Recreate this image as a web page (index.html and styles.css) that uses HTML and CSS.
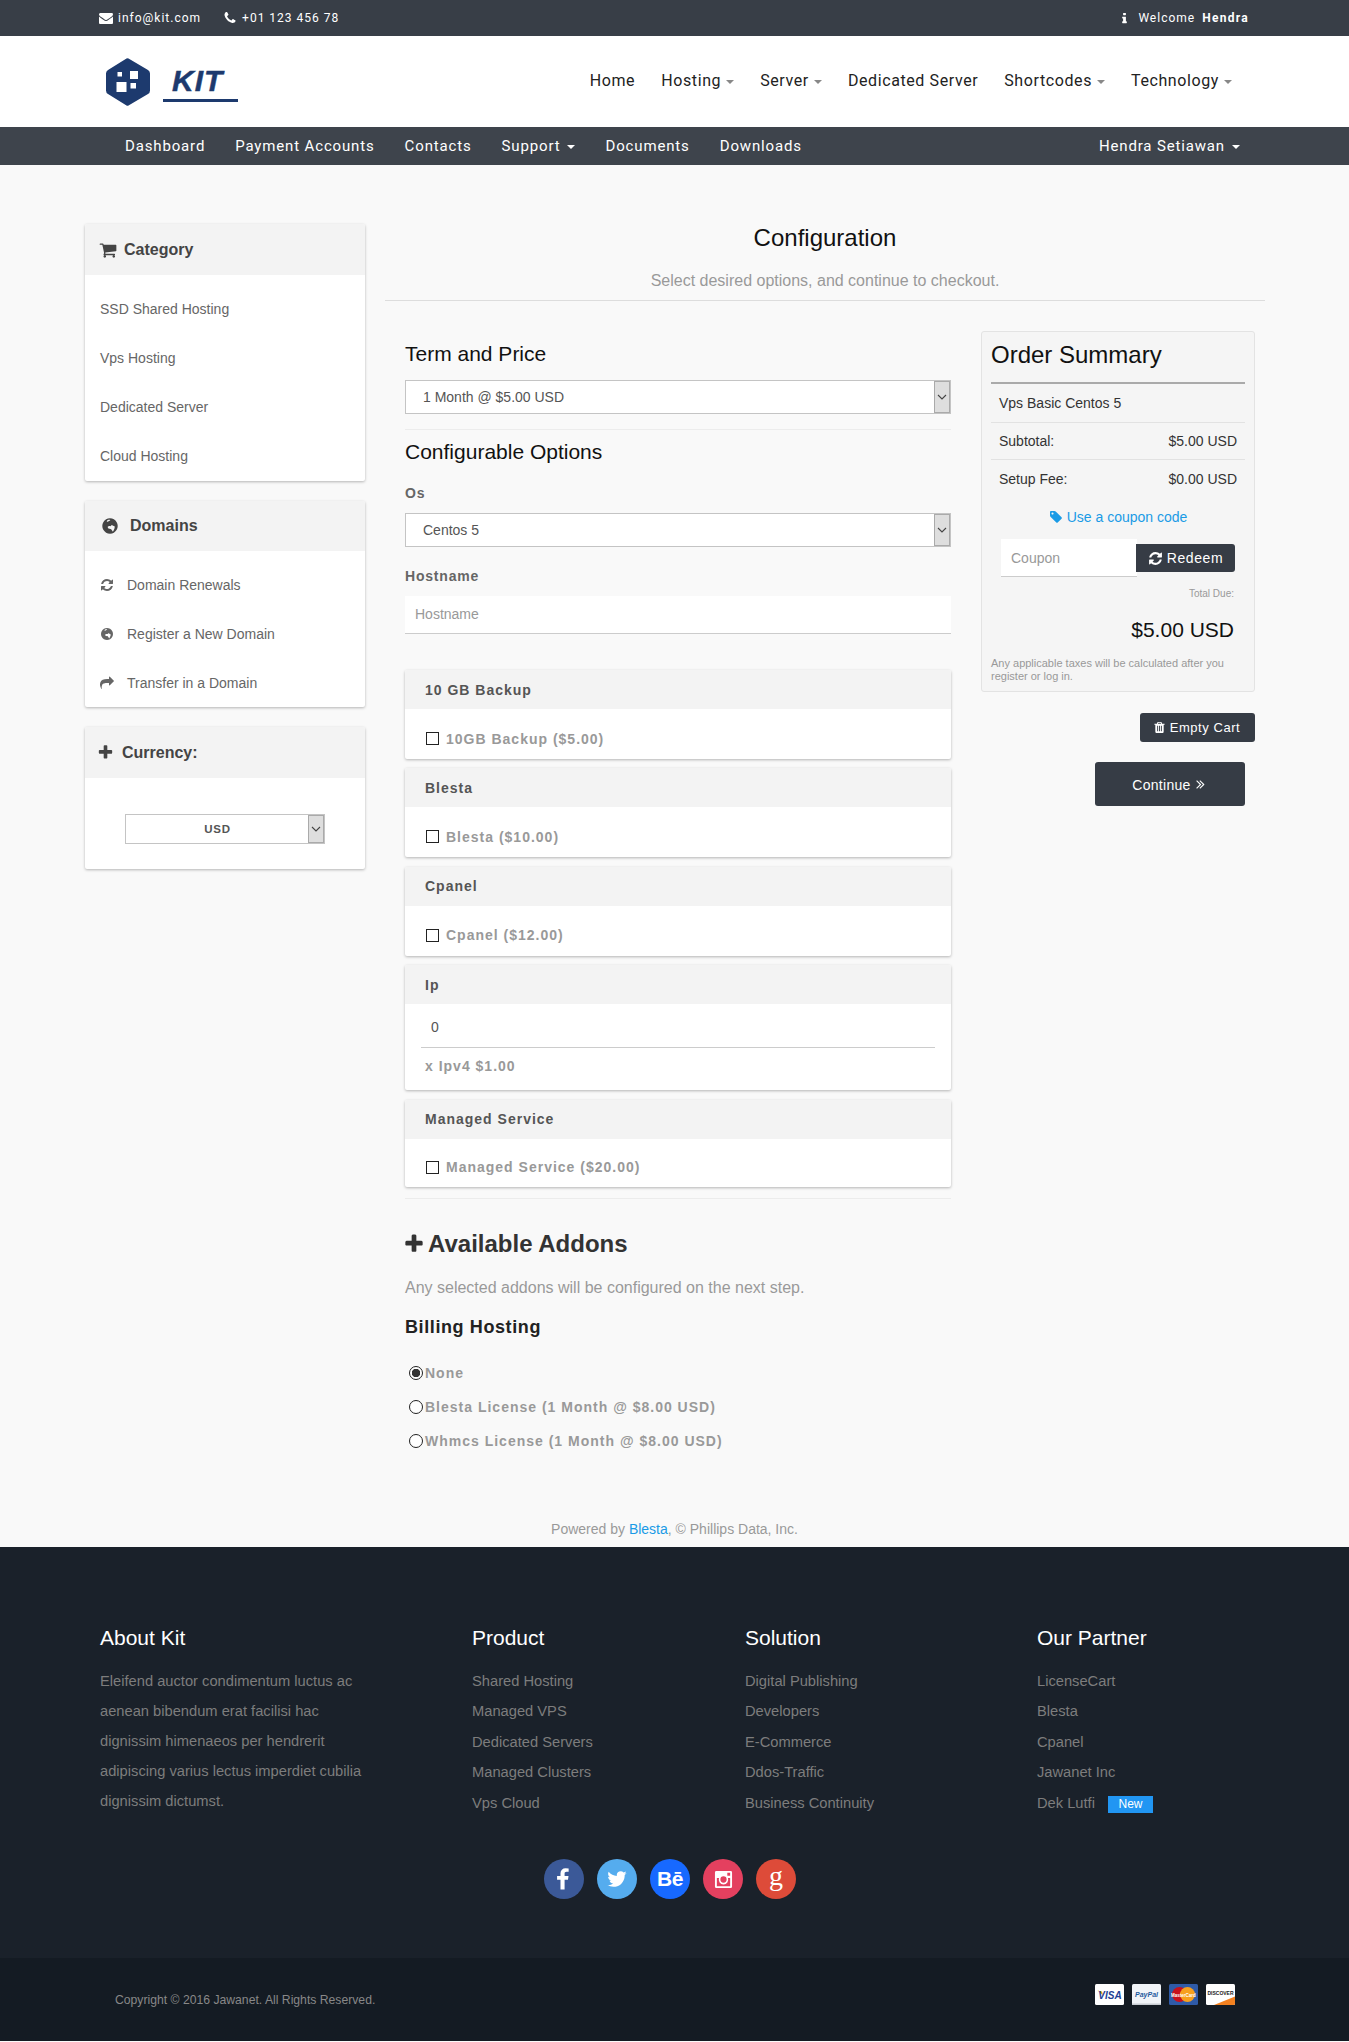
FILE: index.html
```html
<!DOCTYPE html>
<html lang="en">
<head>
<meta charset="utf-8">
<title>Configuration</title>
<link rel="stylesheet" href="styles.css">
</head>
<body>
<svg class="defs" width="0" height="0" aria-hidden="true">
  <symbol id="i-env" viewBox="0 0 1792 1792"><path d="M1792 710v794q0 66-47 113t-113 47h-1472q-66 0-113-47t-47-113v-794q44 49 101 87 362 246 497 345 57 42 92.500 65.500t94.500 48 110 24.500h2q51 0 110-24.500t94.500-48 92.500-65.500q170-123 498-345 57-39 100-87zm0-294q0 79-49 151t-122 123q-376 261-468 325-10 7-42.500 30.500t-54 38-52 32.500-57.500 27-50 9h-2q-23 0-50-9t-57.500-27-52-32.500-54-38-42.500-30.500q-91-64-262-182.500t-205-142.500q-62-42-117-115.500t-55-136.500q0-78 41.500-130t118.500-52h1472q65 0 112.500 47t47.500 113z"/></symbol>
  <symbol id="i-phone" viewBox="0 0 1792 1792"><path d="M1600 1240q0 27-10 70.500t-21 68.500q-21 50-122 106-94 51-186 51-27 0-53-3.500t-57.500-12.500-47-14.500-55.500-20.500-49-18q-98-35-175-83-127-79-264-216t-216-264q-48-77-83-175-3-9-18-49t-20.500-55.500-14.500-47-12.500-57.500-3.500-53q0-92 51-186 56-101 106-122 25-11 68.500-21t70.500-10q14 0 21 3 18 6 53 76 11 19 30 54t35 63.500 31 53.500q3 4 17.500 25t21.500 35.500 7 28.500q0 20-28.500 50t-62 55-62 53-28.500 46q0 9 5 22.500t8.500 20.500 14 24 11.500 19q76 137 174 235t235 174q2 1 19 11.500t24 14 20.500 8.500 22.500 5q18 0 46-28.500t53-62 55-62 50-28.500q14 0 28.500 7t35.500 21.500 25 17.500q25 15 53.500 31t63.500 35 54 30q70 35 76 53 3 7 3 21z"/></symbol>
  <symbol id="i-info" viewBox="0 0 1792 1792"><path d="M1216 1344v128q0 26-19 45t-45 19h-512q-26 0-45-19t-19-45v-128q0-26 19-45t45-19h64v-384h-64q-26 0-45-19t-19-45v-128q0-26 19-45t45-19h384q26 0 45 19t19 45v576h64q26 0 45 19t19 45zm-128-1152v192q0 26-19 45t-45 19h-256q-26 0-45-19t-19-45v-192q0-26 19-45t45-19h256q26 0 45 19t19 45z"/></symbol>
  <symbol id="i-plus" viewBox="0 0 1792 1792"><path d="M1600 736v192q0 40-28 68t-68 28h-416v416q0 40-28 68t-68 28h-192q-40 0-68-28t-28-68v-416h-416q-40 0-68-28t-28-68v-192q0-40 28-68t68-28h416v-416q0-40 28-68t68-28h192q40 0 68 28t28 68v416h416q40 0 68 28t28 68z"/></symbol>
  <symbol id="i-refresh" viewBox="0 0 1792 1792"><path d="M1639 1056q0 5-1 7-64 268-268 434.500t-478 166.500q-146 0-282.500-55t-243.500-157l-129 129q-19 19-45 19t-45-19-19-45v-448q0-26 19-45t45-19h448q26 0 45 19t19 45-19 45l-137 137q71 66 161 102t187 36q134 0 250-65t186-179q11-17 53-117 8-23 30-23h192q13 0 22.500 9.500t9.500 22.500zm25-800v448q0 26-19 45t-45 19h-448q-26 0-45-19t-19-45 19-45l138-138q-148-137-349-137-134 0-250 65t-186 179q-11 17-53 117-8 23-30 23h-199q-13 0-22.500-9.500t-9.500-22.500v-7q65-268 270-434.500t480-166.500q146 0 284 55.500t245 156.500l130-129q19-19 45-19t45 19 19 45z"/></symbol>
  <symbol id="i-share" viewBox="0 0 1792 1792"><path d="M1792 640q0 26-19 45l-512 512q-19 19-45 19t-45-19-19-45v-256h-224q-98 0-175.500 6t-154 21.500-133 42.500-105.500 69.500-80 101-48.500 138.500-17.500 181q0 55 5 123 0 6 2.500 23.500t2.500 26.500q0 15-8.500 25t-23.500 10q-16 0-28-17-7-9-13-22t-13.500-30-10.500-24q-127-285-127-451 0-199 53-333 162-403 875-403h224v-256q0-26 19-45t45-19 45 19l512 512q19 19 19 45z"/></symbol>
  <symbol id="i-cart" viewBox="0 0 1792 1792"><path d="M704 1536q0 52-38 90t-90 38-90-38-38-90 38-90 90-38 90 38 38 90zm896 0q0 52-38 90t-90 38-90-38-38-90 38-90 90-38 90 38 38 90zm128-1088v512q0 24-16.500 42.500t-40.500 21.500l-1044 122q13 60 13 70 0 16-24 64h920q26 0 45 19t19 45-19 45-45 19h-1024q-26 0-45-19t-19-45q0-11 8-31.500t16-36 21.500-40 15.500-29.500l-177-823h-204q-26 0-45-19t-19-45 19-45 45-19h256q16 0 28.500 6.500t19.500 15.500 13 24.500 8 26 5.500 29.500 4.500 26h1201q26 0 45 19t19 45z"/></symbol>
  <symbol id="i-tag" viewBox="0 0 1792 1792"><path d="M576 448q0-53-37.500-90.500t-90.500-37.500-90.500 37.500-37.500 90.500 37.500 90.500 90.500 37.500 90.500-37.500 37.500-90.500zm1067 576q0 53-37 90l-491 492q-39 37-91 37-53 0-90-37l-715-716q-38-37-64.500-101t-26.500-117v-416q0-52 38-90t90-38h416q53 0 117 26.500t102 64.500l715 714q37 39 37 91z"/></symbol>
  <symbol id="i-trash" viewBox="0 0 1792 1792"><path d="M704 1376v-704q0-14-9-23t-23-9h-64q-14 0-23 9t-9 23v704q0 14 9 23t23 9h64q14 0 23-9t9-23zm256 0v-704q0-14-9-23t-23-9h-64q-14 0-23 9t-9 23v704q0 14 9 23t23 9h64q14 0 23-9t9-23zm256 0v-704q0-14-9-23t-23-9h-64q-14 0-23 9t-9 23v704q0 14 9 23t23 9h64q14 0 23-9t9-23zm-544-992h448l-48-117q-7-9-17-11h-317q-10 2-17 11zm928 32v64q0 14-9 23t-23 9h-96v948q0 83-47 143.500t-113 60.500h-832q-66 0-113-58.500t-47-141.500v-952h-96q-14 0-23-9t-9-23v-64q0-14 9-23t23-9h309l70-167q15-37 54-63t79-26h320q40 0 79 26t54 63l70 167h309q14 0 23 9t9 23z"/></symbol>
  <symbol id="i-globe" viewBox="0 0 1792 1792"><path fill-rule="evenodd" d="M896 128q209 0 385.500 103t279.500 279.500 103 385.500-103 385.500-279.500 279.500-385.500 103-385.500-103-279.500-279.500-103-385.500 103-385.500 279.500-279.500 385.500-103zM1180 1470c-40-110-120-170-170-250-40-60-150-70-230-50-70-40-130-130-100-220 70-60 170-70 250-40 70-30 90-120 170-120 60 60 150 110 230 110 50 90 40 200-10 290-40 110-90 210-140 280zM640 320c90-40 200-50 290-30-30 70-100 110-170 130-40 60-130 60-190 20 20-50 40-90 70-120z"/></symbol>
  <symbol id="i-dbl" viewBox="0 64 1792 1792"><path d="M979 960q0 13-10 23l-466 466q-10 10-23 10t-23-10l-50-50q-10-10-10-23t10-23l393-393-393-393q-10-10-10-23t10-23l50-50q10-10 23-10t23 10l466 466q10 10 10 23zm384 0q0 13-10 23l-466 466q-10 10-23 10t-23-10l-50-50q-10-10-10-23t10-23l393-393-393-393q-10-10-10-23t10-23l50-50q10-10 23-10t23 10l466 466q10 10 10 23z"/></symbol>
  <symbol id="i-chev" viewBox="0 0 10 6"><path d="M1 1l4 4 4-4" fill="none" stroke="#444" stroke-width="1.1"/></symbol>
</svg>

<div class="topbar">
  <div class="top-left">
    <span class="top-item"><svg class="ic ic-top"><use href="#i-env"/></svg>info@kit.com</span>
    <span class="top-item"><svg class="ic ic-top"><use href="#i-phone"/></svg>+01 123 456 78</span>
  </div>
  <div class="top-right"><svg class="ic ic-top"><use href="#i-info"/></svg>Welcome <b>Hendra</b></div>
</div>

<header class="header">
  <a class="logo" href="#">
    <svg class="logo-mark" viewBox="0 0 46 50">
      <path d="M23 1.500l19.500 11.500q2 1.200 2 3.500v17q0 2.300-2 3.500l-19.500 11.500q-1 .6-2 0L2.500 37q-2-1.200-2-3.500v-17q0-2.300 2-3.500L21 1.500q1-.6 2 0z" fill="#1d3a6e"/>
      <rect x="24.500" y="14" width="8" height="8" fill="#fff"/>
      <rect x="12" y="15" width="4.500" height="4.500" fill="#fff"/>
      <rect x="11" y="25" width="10" height="10" fill="#fff"/>
      <rect x="25" y="26" width="5.500" height="5.500" fill="#fff"/>
    </svg>
    <span class="logo-word">KIT</span>
  </a>
  <nav class="mainnav">
    <a href="#">Home</a>
    <a href="#">Hosting<i class="caret"></i></a>
    <a href="#">Server<i class="caret"></i></a>
    <a href="#">Dedicated Server</a>
    <a href="#">Shortcodes<i class="caret"></i></a>
    <a href="#">Technology<i class="caret"></i></a>
  </nav>
</header>

<div class="subnav">
  <nav class="subnav-left">
    <a href="#">Dashboard</a>
    <a href="#">Payment Accounts</a>
    <a href="#">Contacts</a>
    <a href="#">Support<i class="caret caret-light"></i></a>
    <a href="#">Documents</a>
    <a href="#">Downloads</a>
  </nav>
  <a class="subnav-user" href="#">Hendra Setiawan<i class="caret caret-light"></i></a>
</div>

<main class="page">
  <aside class="sidebar">
    <section class="side-panel">
      <h3 class="side-head side-head-cat"><svg class="ic ic-side"><use href="#i-cart"/></svg>Category</h3>
      <ul class="side-list">
        <li><a href="#">SSD Shared Hosting</a></li>
        <li><a href="#">Vps Hosting</a></li>
        <li><a href="#">Dedicated Server</a></li>
        <li><a href="#">Cloud Hosting</a></li>
      </ul>
    </section>
    <section class="side-panel">
      <h3 class="side-head side-head-dom"><svg class="ic ic-side"><use href="#i-globe"/></svg>Domains</h3>
      <ul class="side-list side-list-dom">
        <li><a href="#"><svg class="ic ic-item"><use href="#i-refresh"/></svg>Domain Renewals</a></li>
        <li><a href="#"><svg class="ic ic-item"><use href="#i-globe"/></svg>Register a New Domain</a></li>
        <li><a href="#"><svg class="ic ic-item"><use href="#i-share"/></svg>Transfer in a Domain</a></li>
      </ul>
    </section>
    <section class="side-panel">
      <h3 class="side-head side-head-cur"><svg class="ic ic-side"><use href="#i-plus"/></svg>Currency:</h3>
      <div class="currency-body">
        <div class="sel sel-small">
          <select class="sel-input sel-input-usd"><option>USD</option></select>
          <span class="sel-btn"><svg class="sel-chev"><use href="#i-chev"/></svg></span>
        </div>
      </div>
    </section>
  </aside>

  <div class="content">
    <div class="title-block">
      <h1 class="title">Configuration</h1>
      <p class="subtitle">Select desired options, and continue to checkout.</p>
    </div>
    <div class="content-cols">
      <form class="config">
        <h2 class="h-section h-term">Term and Price</h2>
        <div class="sel">
          <select class="sel-input"><option>1 Month @ $5.00 USD</option></select>
          <span class="sel-btn"><svg class="sel-chev"><use href="#i-chev"/></svg></span>
        </div>
        <hr class="rule rule-a">
        <h2 class="h-section h-conf">Configurable Options</h2>
        <label class="field-label field-os">Os</label>
        <div class="sel">
          <select class="sel-input"><option>Centos 5</option></select>
          <span class="sel-btn"><svg class="sel-chev"><use href="#i-chev"/></svg></span>
        </div>
        <label class="field-label field-host">Hostname</label>
        <input class="text-input" type="text" placeholder="Hostname">

        <div class="opt-panels">
          <section class="opt-panel">
            <h4 class="opt-head">10 GB Backup</h4>
            <label class="opt-body"><input class="check" type="checkbox">10GB Backup ($5.00)</label>
          </section>
          <section class="opt-panel">
            <h4 class="opt-head">Blesta</h4>
            <label class="opt-body"><input class="check" type="checkbox">Blesta ($10.00)</label>
          </section>
          <section class="opt-panel">
            <h4 class="opt-head">Cpanel</h4>
            <label class="opt-body"><input class="check" type="checkbox">Cpanel ($12.00)</label>
          </section>
          <section class="opt-panel">
            <h4 class="opt-head">Ip</h4>
            <div class="qty-wrap"><input class="qty" type="text" value="0"></div>
            <div class="qty-label">x Ipv4 $1.00</div>
          </section>
          <section class="opt-panel">
            <h4 class="opt-head">Managed Service</h4>
            <label class="opt-body"><input class="check" type="checkbox">Managed Service ($20.00)</label>
          </section>
        </div>
        <hr class="rule rule-b">
        <h2 class="h-addons"><svg class="ic ic-addon"><use href="#i-plus"/></svg>Available Addons</h2>
        <p class="addons-note">Any selected addons will be configured on the next step.</p>
        <h3 class="h-billing">Billing Hosting</h3>
        <div class="radios">
          <label class="radio-row"><input class="radio" type="radio" name="addon" checked>None</label>
          <label class="radio-row"><input class="radio" type="radio" name="addon">Blesta License (1 Month @ $8.00 USD)</label>
          <label class="radio-row"><input class="radio" type="radio" name="addon">Whmcs License (1 Month @ $8.00 USD)</label>
        </div>
      </form>

      <aside class="summary-col">
        <div class="summary">
          <h2 class="summary-title">Order Summary</h2>
          <div class="sum-row sum-name">Vps Basic Centos 5</div>
          <div class="sum-row sum-sub"><span>Subtotal:</span><span>$5.00 USD</span></div>
          <div class="sum-row sum-fee"><span>Setup Fee:</span><span>$0.00 USD</span></div>
          <a class="coupon-link" href="#"><svg class="ic ic-tag"><use href="#i-tag"/></svg>Use a coupon code</a>
          <div class="coupon">
            <input class="coupon-input" type="text" placeholder="Coupon">
            <button class="redeem" type="button"><svg class="ic ic-btn"><use href="#i-refresh"/></svg>Redeem</button>
          </div>
          <div class="total-label">Total Due:</div>
          <div class="total">$5.00 USD</div>
          <p class="tax-note">Any applicable taxes will be calculated after you register or log in.</p>
        </div>
        <div class="cart-actions">
          <button class="btn-empty" type="button"><svg class="ic ic-trash"><use href="#i-trash"/></svg>Empty Cart</button>
          <button class="btn-continue" type="button">Continue<svg class="ic ic-dbl"><use href="#i-dbl"/></svg></button>
        </div>
      </aside>
    </div>
  </div>
</main>

<p class="powered">Powered by <a href="#">Blesta</a>, © Phillips Data, Inc.</p>

<footer class="footer">
  <div class="foot-cols">
    <div class="foot-col">
      <h4 class="foot-head">About Kit</h4>
      <p class="foot-text">Eleifend auctor condimentum luctus ac aenean bibendum erat facilisi hac dignissim himenaeos per hendrerit adipiscing varius lectus imperdiet cubilia dignissim dictumst.</p>
    </div>
    <div class="foot-col">
      <h4 class="foot-head">Product</h4>
      <ul class="foot-list">
        <li>Shared Hosting</li><li>Managed VPS</li><li>Dedicated Servers</li><li>Managed Clusters</li><li>Vps Cloud</li>
      </ul>
    </div>
    <div class="foot-col">
      <h4 class="foot-head">Solution</h4>
      <ul class="foot-list">
        <li>Digital Publishing</li><li>Developers</li><li>E-Commerce</li><li>Ddos-Traffic</li><li>Business Continuity</li>
      </ul>
    </div>
    <div class="foot-col">
      <h4 class="foot-head">Our Partner</h4>
      <ul class="foot-list">
        <li>LicenseCart</li><li>Blesta</li><li>Cpanel</li><li>Jawanet Inc</li><li>Dek Lutfi <span class="badge">New</span></li>
      </ul>
    </div>
  </div>
  <div class="socials">
    <a class="soc soc-fb" href="#"><svg class="soc-ic" viewBox="0 0 1792 1792"><path d="M1343 12v264h-157q-86 0-116 36t-30 108v189h293l-39 296h-254v759h-306v-759h-255v-296h255v-218q0-186 104-288.500t277-102.500q147 0 228 12z" transform="translate(-100 100) scale(1 .95)"/></svg></a>
    <a class="soc soc-tw" href="#"><svg class="soc-ic soc-ic-tw" viewBox="0 0 1792 1792"><path d="M1684 408q-67 98-162 167 1 14 1 42 0 130-38 259.500t-115.500 248.500-184.500 210.500-258 146-323 54.500q-271 0-496-145 35 4 78 4 225 0 401-138-105-2-188-64.500t-114-159.500q33 5 61 5 43 0 85-11-112-23-185.500-111.500t-73.500-205.500v-4q68 38 146 41-66-44-105-115t-39-154q0-88 44-163 121 149 294.500 238.500t371.500 99.500q-8-38-8-74 0-134 94.500-228.500t228.500-94.500q140 0 236 102 109-21 205-78-37 115-142 178 97-11 185-50z"/></svg></a>
    <a class="soc soc-be" href="#">Bē</a>
    <a class="soc soc-ig" href="#"><svg class="soc-ic soc-ic-ig" viewBox="0 0 20 20"><path fill-rule="evenodd" d="M2.500 1h15A1.500 1.500 0 0 1 19 2.500v15a1.500 1.500 0 0 1-1.500 1.500h-15A1.500 1.500 0 0 1 1 17.500v-15A1.500 1.500 0 0 1 2.500 1zM14 3v3h3V3h-3zM3 8.500V17h14V8.500h-2.300a5 5 0 1 1-9.400 0H3zM10 6.700a3.300 3.300 0 1 0 0 6.600 3.300 3.300 0 0 0 0-6.600z"/></svg></a>
    <a class="soc soc-gp" href="#">g</a>
  </div>
  <div class="foot-bottom">
    <span class="copyright">Copyright © 2016 Jawanet. All Rights Reserved.</span>
    <div class="cards">
      <svg class="card" viewBox="0 0 29 21"><rect width="29" height="21" rx="1.500" fill="#fff"/><path d="M2.500 6.500l4.500 1 1.200 4z" fill="#f0a41c"/><text x="15" y="14.500" class="card-visa">VISA</text></svg>
      <svg class="card" viewBox="0 0 29 21"><rect width="29" height="21" rx="1.500" fill="#f1f4f8"/><rect y="19.500" width="29" height="1.500" fill="#c8ccd2"/><text x="14.500" y="13" class="card-pp">PayPal</text></svg>
      <svg class="card" viewBox="0 0 29 21"><rect width="29" height="21" rx="1.500" fill="#2f5ba8"/><circle cx="10.500" cy="10.500" r="7.500" fill="#c8101c"/><circle cx="18.500" cy="10.500" r="7.500" fill="#f7a01e"/><text x="14.500" y="12.500" class="card-mc">MasterCard</text></svg>
      <svg class="card" viewBox="0 0 29 21"><rect width="29" height="21" rx="1.500" fill="#fff"/><path d="M8 21L29 12.500v7q0 1.500-1.500 1.500z" fill="#f38120"/><text x="14.500" y="10.500" class="card-dc">DISCOVER</text></svg>
    </div>
  </div>
</footer>
</body>
</html>
```
FILE: styles.css
```css
* { box-sizing: border-box; }
html, body { margin: 0; padding: 0; }
body { background: #f9f9f9; font-family: "Liberation Sans", Arial, sans-serif; font-size: 14px; color: #333; width: 1349px; }
a { color: inherit; text-decoration: none; }
h1, h2, h3, h4, p, ul { margin: 0; padding: 0; font-weight: normal; }
ul { list-style: none; }
.defs { position: absolute; }
.ic { display: inline-block; fill: currentColor; flex: none; }

/* top bar */
.topbar { height: 36px; background: #383e47; color: #fff; font-family: Roboto, sans-serif; font-size: 12px; letter-spacing: 1px; display: flex; justify-content: space-between; align-items: center; padding: 0 100px 0 99px; }
.top-left { display: flex; gap: 22px; }
.top-item { display: flex; align-items: center; }
.top-right { display: flex; align-items: center; white-space: pre; }
.top-right b { font-weight: 700; margin-left: 3px; letter-spacing: 1.3px; }
.ic-top { width: 14px; height: 14px; margin-right: 5px; }
.top-right .ic-top { margin-right: 7px; width: 13px; height: 13px; }

/* header */
.header { height: 91px; background: #fff; display: flex; justify-content: space-between; align-items: center; padding: 0 117px 0 105px; }
.logo { display: flex; align-items: flex-start; height: 50px; }
.logo-mark { width: 47px; height: 50px; }
.logo-word { margin-left: 11px; width: 75px; height: 45px; border-bottom: 3px solid #1d3a6e; color: #1d3a6e; font-weight: 700; font-style: italic; font-size: 30px; letter-spacing: 1px; line-height: 41px; padding: 3px 0 0 9px; -webkit-text-stroke: .5px #1d3a6e; }
.mainnav { display: flex; gap: 26px; font-family: Roboto, sans-serif; font-size: 16px; letter-spacing: .6px; color: #222; padding-bottom: 2px; }
.mainnav a { display: flex; align-items: center; }
.caret { display: inline-block; width: 0; height: 0; margin-left: 5px; margin-top: 2px; border-left: 4px solid transparent; border-right: 4px solid transparent; border-top: 4px solid #888; }
.caret-light { border-top-color: #fff; margin-left: 7px; }

/* sub nav */
.subnav { height: 38px; background: #3e444c; color: #fff; display: flex; justify-content: space-between; align-items: center; padding: 0 109px 0 125px; font-family: Roboto, sans-serif; font-size: 15px; letter-spacing: .85px; }
.subnav-left { display: flex; gap: 30px; }
.subnav-left a, .subnav-user { display: flex; align-items: center; }

/* page */
.page { display: grid; grid-template-columns: 280px 880px; column-gap: 20px; padding-left: 85px; }
.sidebar { padding-top: 59px; display: flex; flex-direction: column; gap: 20px; }
.side-panel { background: #fff; box-shadow: 0 1px 3px rgba(0,0,0,.28); border-radius: 2px; overflow: hidden; }
.side-head { height: 51px; background: #f3f3f3; display: flex; align-items: center; padding-left: 15px; font-size: 16px; font-weight: 700; color: #444; }
.ic-side { width: 15px; height: 15px; margin-right: 9px; }
.side-head-cat .ic-side { width: 18px; height: 18px; margin-left: -1px; margin-right: 7px; }
.side-head-dom { padding-left: 16px; height: 50px; }
.side-head-dom .ic-side { width: 18px; height: 18px; margin-right: 11px; }
.side-head-cur .ic-side { width: 17px; height: 17px; margin-left: -3px; margin-right: 8px; }
.side-list { padding: 9px 0 1px; }
.side-list-dom { padding-bottom: 0; }
.side-list li { height: 49px; display: flex; align-items: center; padding-left: 15px; color: #666; font-size: 14px; }
.side-list a { display: flex; align-items: center; }
.ic-item { width: 14px; height: 14px; margin-right: 13px; }
.currency-body { padding: 36px 40px 25px; }

/* select */
.sel { position: relative; height: 34px; }
.sel-input { width: 100%; height: 100%; appearance: none; -webkit-appearance: none; background: #fff; border: 1px solid #c4c4c4; border-radius: 0; padding: 0 18px 0 17px; font-family: inherit; font-size: 14px; color: #555; }
.sel-btn { position: absolute; top: 1px; right: 1px; bottom: 1px; width: 16px; background: #dedede; border: 1px solid #aaa; display: flex; align-items: center; justify-content: center; }
.sel-chev { width: 10px; height: 6px; }
.sel-small { height: 30px; }
.sel-input-usd { text-align: center; padding: 0 15px 0 0; font-weight: 700; font-size: 11.500px; letter-spacing: .8px; color: #555; }

/* content */
.title-block { padding-top: 58px; height: 136px; border-bottom: 1px solid #ddd; text-align: center; }
.title { font-size: 24px; line-height: 30px; color: #111; }
.subtitle { margin-top: 16px; font-size: 16px; line-height: 24px; color: #999; }
.content-cols { display: grid; grid-template-columns: 546px 274px; column-gap: 30px; padding-left: 20px; }
.config { padding-top: 39px; }
.h-section { font-size: 21px; line-height: 28px; color: #111; }
.h-term { margin-bottom: 12px; }
.rule { border: 0; border-top: 1px solid #ececec; margin: 0; }
.rule-a { margin-top: 15px; }
.h-conf { margin-top: 8px; }
.field-label { display: block; font-weight: 700; font-size: 14px; line-height: 20px; letter-spacing: .8px; color: #666; }
.field-os { margin-top: 17px; margin-bottom: 10px; }
.field-host { margin-top: 19px; margin-bottom: 10px; }
.text-input { display: block; width: 100%; height: 38px; background: #fff; border: 0; border-bottom: 1px solid #ccc; padding: 0 10px 1px; font-family: inherit; font-size: 14px; }
.text-input::placeholder, .coupon-input::placeholder { color: #999; opacity: 1; }

.opt-panels { margin-top: 36px; display: flex; flex-direction: column; gap: 9.400px; }
.opt-panel { background: #fff; box-shadow: 0 1px 3px rgba(0,0,0,.28); border-radius: 2px; overflow: hidden; }
.opt-head { height: 39px; background: #f3f3f3; display: flex; align-items: center; padding-left: 20px; font-size: 14px; font-weight: 700; letter-spacing: 1px; color: #555; }
.opt-body { height: 50px; display: flex; align-items: center; padding: 9px 0 0 21px; font-size: 14px; font-weight: 700; letter-spacing: 1px; color: #999; }
.opt-panel:last-child .opt-body { height: 48px; padding-top: 9px; }
.check { appearance: none; -webkit-appearance: none; width: 13px; height: 13px; margin: 0 7px 0 0; border: 1px solid #222; background: #fff; }
.qty-wrap { padding: 0 16px; }
.qty { display: block; width: 100%; height: 44px; border: 0; border-bottom: 1px solid #ccc; padding: 2px 10px 0; font-family: inherit; font-size: 14px; color: #555; }
.qty-label { height: 42px; padding: 10px 0 0 20px; font-size: 14px; font-weight: 700; letter-spacing: 1px; color: #999; }
.rule-b { margin-top: 11px; }
.h-addons { margin-top: 28px; display: flex; align-items: center; font-size: 24px; line-height: 34px; font-weight: 700; color: #333; }
.ic-addon { width: 22px; height: 22px; margin-right: 3px; margin-left: -2px; }
.addons-note { margin-top: 15px; font-size: 16px; line-height: 24px; color: #999; }
.h-billing { margin-top: 15px; font-size: 18px; line-height: 24px; font-weight: 700; letter-spacing: .6px; color: #222; }
.radios { margin-top: 17px; }
.radio-row { height: 34px; display: flex; align-items: center; padding-left: 4px; font-weight: 700; font-size: 14px; letter-spacing: 1px; color: #999; }
.radio { appearance: none; -webkit-appearance: none; width: 14px; height: 14px; margin: 0 2px 0 0; border: 1px solid #222; border-radius: 50%; background: #fff; }
.radio:checked { background: radial-gradient(circle, #333 0 4px, #fff 4.500px); }

/* summary */
.summary-col { padding-top: 30px; }
.summary { height: 361px; background: #f5f5f5; border: 1px solid #e3e3e3; border-radius: 3px; padding: 0 9px; }
.summary-title { font-size: 24px; line-height: 30px; padding-top: 8px; height: 52px; border-bottom: 2px solid #aaa; color: #111; }
.sum-row { display: flex; justify-content: space-between; align-items: center; padding: 0 8px; font-size: 14px; color: #333; }
.sum-name { height: 39px; border-bottom: 1px solid #e2e2e2; }
.sum-sub { height: 37px; border-bottom: 1px solid #e2e2e2; }
.sum-fee { height: 37px; }
.coupon-link { display: flex; justify-content: center; align-items: center; height: 20px; margin-top: 10px; font-size: 14px; color: #1a9be6; }
.ic-tag { width: 14px; height: 14px; margin-right: 4px; }
.coupon { display: flex; align-items: center; margin: 12px 10px 0 10px; }
.coupon-input { width: 136px; height: 38px; background: #fff; border: 0; border-bottom: 1px solid #ccc; padding: 0 10px; font-family: inherit; font-size: 14px; flex: none; }
.redeem { flex: 1; height: 28px; margin-left: -1px; border: 0; background: #363c45; color: #fff; border-radius: 0 3px 3px 0; font-family: inherit; font-size: 14px; letter-spacing: .6px; display: flex; align-items: center; justify-content: center; }
.ic-btn { width: 15px; height: 15px; margin-right: 4px; }
.total-label { text-align: right; padding-right: 11px; margin-top: 11px; font-size: 10px; line-height: 12px; color: #999; }
.total { text-align: right; padding-right: 11px; margin-top: 16px; font-size: 21px; line-height: 28px; color: #111; }
.tax-note { margin-top: 13px; font-size: 11px; line-height: 13px; color: #999; }
.cart-actions { display: flex; flex-direction: column; align-items: flex-end; }
.btn-empty { margin-top: 21px; width: 115px; height: 29px; border: 0; border-radius: 3px; background: #363c45; color: #fff; font-family: inherit; font-size: 13px; letter-spacing: .55px; display: flex; align-items: center; justify-content: center; padding-right: 8px; }
.ic-trash { width: 13px; height: 13px; margin-right: 4px; }
.btn-continue { margin-top: 20px; margin-right: 10px; width: 150px; height: 44px; border: 0; border-radius: 3px; background: #363c45; color: #fff; font-family: inherit; font-size: 14px; letter-spacing: .3px; display: flex; align-items: center; justify-content: center; padding-top: 2px; }
.ic-dbl { width: 15px; height: 15px; margin-left: 2px; }

.powered { margin-top: 61px; height: 28px; line-height: 20px; text-align: center; font-size: 14px; color: #999; }
.powered a { color: #1a9be6; }

/* footer */
.footer { background: #1a212a; color: #7d7d7d; font-size: 14.700px; }
.foot-cols { display: grid; grid-template-columns: 372px 273px 292px 1fr; padding: 77px 0 0 100px; }
.foot-head { font-size: 21px; line-height: 28px; color: #fff; margin-bottom: 14px; }
.foot-text { width: 270px; line-height: 30px; }
.foot-list li { height: 30.500px; line-height: 30px; }
.badge { display: inline-block; width: 45px; height: 17px; line-height: 17px; margin-left: 9px; background: #2196f3; color: #fff; font-size: 12px; text-align: center; }
.socials { display: flex; justify-content: center; gap: 13px; padding: 41px 9px 59px 0; }
.soc { width: 40px; height: 40px; border-radius: 50%; display: flex; align-items: center; justify-content: center; color: #fff; }
.soc-ic { width: 24px; height: 24px; fill: #fff; }
.soc-ic-tw { width: 22px; height: 22px; }
.soc-ic-ig { width: 19px; height: 19px; }
.soc-fb { background: #3b5998; }
.soc-tw { background: #55acee; }
.soc-be { background: #1769ff; font-weight: 700; font-size: 21px; letter-spacing: -.5px; }
.soc-ig { background: #e4405f; }
.soc-gp { background: #dd4b39; font-family: "Liberation Serif", serif; font-size: 28px; line-height: 30px; padding-bottom: 7px; }
.foot-bottom { height: 83px; background: #141b23; display: flex; justify-content: space-between; align-items: center; padding: 0 114px 0 115px; }
.copyright { font-size: 12.200px; color: #888; }
.cards { display: flex; gap: 8px; margin-top: -11px; }
.card { width: 29px; height: 21px; display: block; }
.card-visa { font: italic 700 10px "Liberation Sans", sans-serif; fill: #1e3f95; text-anchor: middle; }
.card-pp { font: italic 700 7px "Liberation Sans", sans-serif; fill: #1f5a9e; text-anchor: middle; }
.card-mc { font: 700 4.500px "Liberation Sans", sans-serif; fill: #fff; text-anchor: middle; }
.card-dc { font: 700 5px "Liberation Sans", sans-serif; fill: #222; text-anchor: middle; }
```
